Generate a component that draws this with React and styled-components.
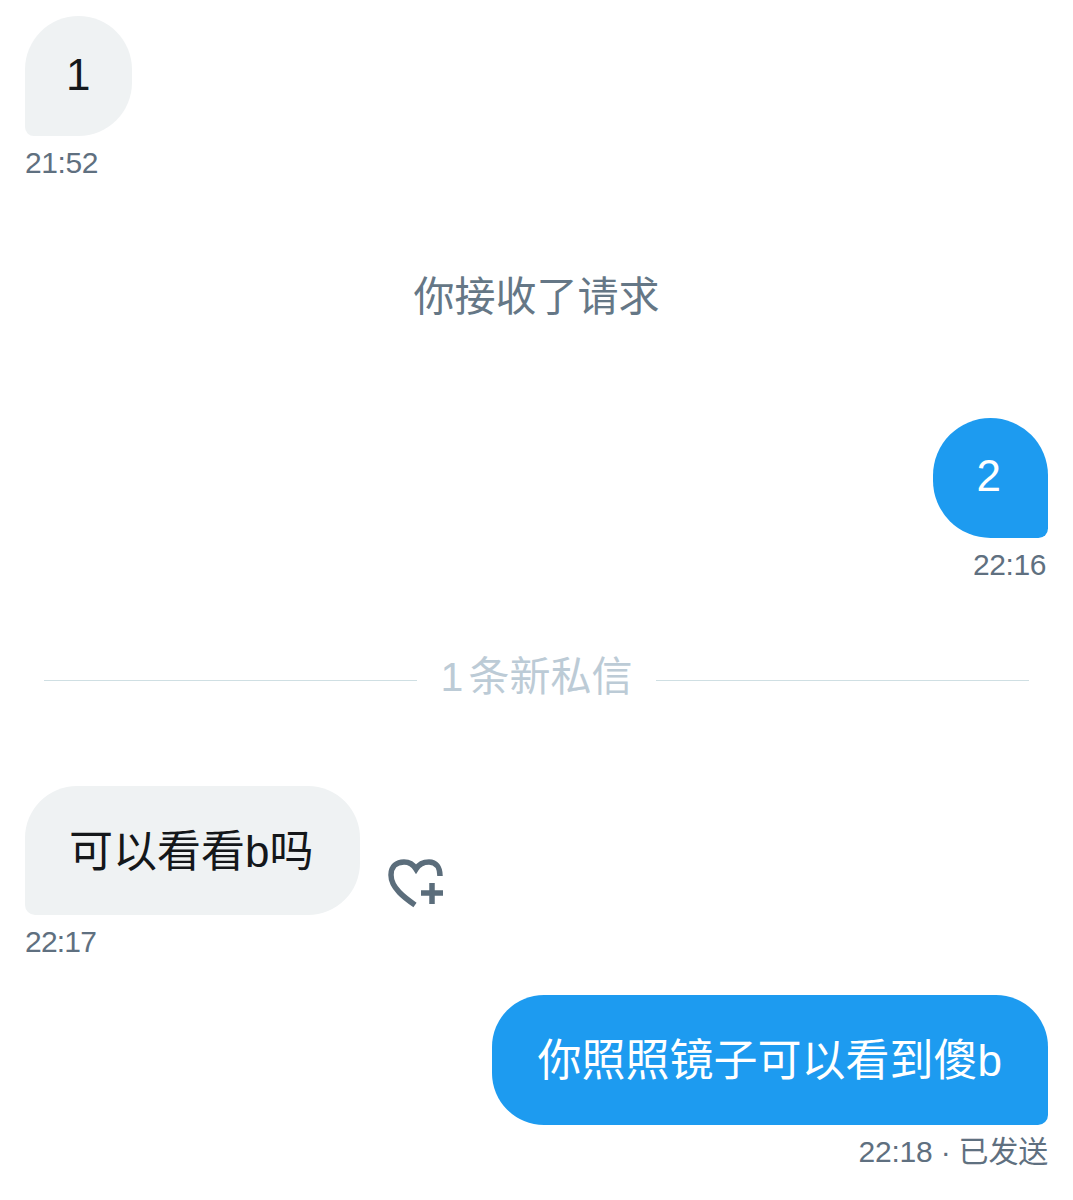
import React from 'react'
import styled, { createGlobalStyle } from 'styled-components'

const FONT = `"Liberation Sans", "Noto Sans CJK SC", sans-serif`

const GlobalStyle = createGlobalStyle`
  html, body { margin: 0; padding: 0; background: #ffffff; }
  body { font-family: ${FONT}; }
`

const Page = styled.div`
  width: 1073px;
  height: 1200px;
  box-sizing: border-box;
  padding: 16px 25px 0;
  overflow: hidden;
`

const Row = styled.div`
  display: flex;
  justify-content: ${p => (p.$mine ? 'flex-end' : 'flex-start')};
  margin-top: ${p => p.$top || 0}px;
`

const Bubble = styled.div`
  height: ${p => p.$height}px;
  box-sizing: border-box;
  padding: 0 ${p => p.$right}px ${p => p.$lift}px ${p => p.$left}px;
  display: flex;
  align-items: center;
  font-size: 44px;
  white-space: nowrap;
  background: ${p => (p.$mine ? '#1d9bf0' : '#eff2f3')};
  color: ${p => (p.$mine ? '#ffffff' : '#14171a')};
  border-radius: ${p => p.$radius}px;
  ${p => (p.$mine ? 'border-bottom-right-radius: 10px;' : 'border-bottom-left-radius: 10px;')}
`

const Time = styled.div`
  margin-top: 9px;
  margin-right: ${p => p.$inset || 0}px;
  font-size: 30px;
  line-height: 36px;
  letter-spacing: ${p => p.$track ?? -0.4}px;
  color: #5f7080;
  text-align: ${p => (p.$mine ? 'right' : 'left')};
`

const Notice = styled.div`
  margin-top: ${p => p.$top}px;
  padding-top: 2px;
  height: 48px;
  font-size: 41px;
  line-height: 50px;
  color: #657786;
  text-align: center;
`

const Divider = styled.div`
  margin: 69px 19px 0;
  height: 50px;
  display: flex;
  align-items: center;
  gap: 23px;
`

const DividerLine = styled.div`
  flex: 1;
  height: 1px;
  margin-top: 6px;
  background: #cfdfe3;
`

const DividerText = styled.div`
  font-size: 41px;
  line-height: 50px;
  word-spacing: -6px;
  color: #bccbd6;
  white-space: nowrap;
`

const LikeIcon = styled.svg`
  width: 62px;
  height: 56px;
  align-self: flex-end;
  margin: 0 0 4px 25px;
  fill: none;
  stroke: #5b6d7b;
`

const HeartPlus = () => (
  <LikeIcon viewBox="0 0 62 56">
    <path
      d="M30 50 C20 43 6 33 6 20 C6 11 12 7 19 7 C24 7 28 9 31 14 C34 9 38 7 44 7 C51 7 55 12 55 21"
      strokeWidth="5.5"
    />
    <path d="M36 38 H58 M47 28 V49" strokeWidth="5.5" />
  </LikeIcon>
)

export default function App() {
  return (
    <Page>
      <GlobalStyle />
      <Row>
        <Bubble $height={120} $left={41} $right={42} $lift={2} $radius={60}>1</Bubble>
      </Row>
      <Time>21:52</Time>

      <Notice $top={89}>你接收了请求</Notice>

      <Row $mine $top={98}>
        <Bubble $mine $height={120} $left={44} $right={47} $lift={4} $radius={60}>2</Bubble>
      </Row>
      <Time $mine $inset={2}>22:16</Time>

      <Divider>
        <DividerLine />
        <DividerText>1 条新私信</DividerText>
        <DividerLine />
      </Divider>

      <Row $top={84}>
        <Bubble $height={129} $left={44} $right={47} $lift={6} $radius={52}>可以看看b吗</Bubble>
        <HeartPlus />
      </Row>
      <Time $track={-0.8}>22:17</Time>

      <Row $mine $top={35}>
        <Bubble $mine $height={130} $left={46} $right={46} $lift={6} $radius={52}>你照照镜子可以看到傻b</Bubble>
      </Row>
      <Time $mine $track={-0.2}>22:18 · 已发送</Time>
    </Page>
  )
}
